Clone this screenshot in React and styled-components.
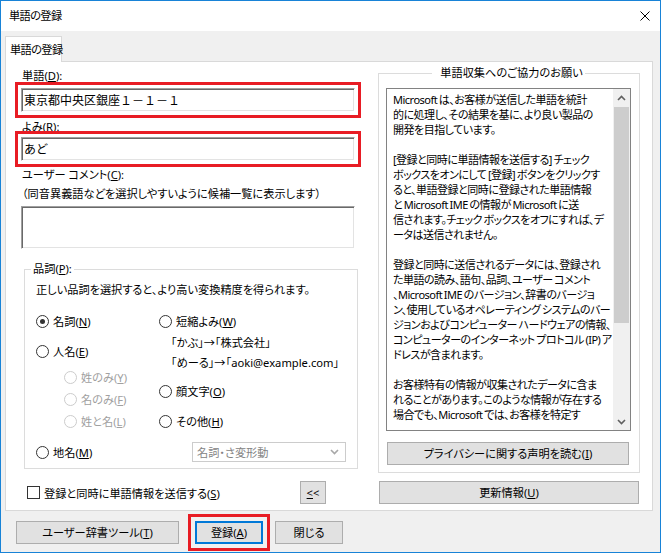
import React from 'react'
import styled, { createGlobalStyle } from 'styled-components'

const GlobalStyle = createGlobalStyle`
  html, body {
    margin: 0;
    padding: 0;
    background: #fff;
  }
  body {
    font-family: "Noto Sans", "Noto Sans CJK JP", sans-serif;
    font-size: 11.2px;
    color: #000;
    font-feature-settings: "palt";
  }
  * {
    box-sizing: border-box;
  }
`

const infoLines = [
  'Microsoft は、お客様が送信した単語を統計',
  '的に処理し、その結果を基に、より良い製品の',
  '開発を目指しています。',
  '',
  '[登録と同時に単語情報を送信する] チェック',
  'ボックスをオンにして [登録] ボタンをクリックす',
  'ると、単語登録と同時に登録された単語情報',
  'と Microsoft IME の情報が Microsoft に送',
  '信されます。チェック ボックスをオフにすれば、デ',
  'ータは送信されません。',
  '',
  '登録と同時に送信されるデータには、登録され',
  'た単語の読み、語句、品詞、ユーザー コメント',
  '、Microsoft IME のバージョン、辞書のバージョ',
  'ン、使用しているオペレーティング システムのバー',
  'ジョンおよびコンピューター ハードウェアの情報、',
  'コンピューターのインターネット プロトコル (IP) ア',
  'ドレスが含まれます。',
  '',
  'お客様特有の情報が収集されたデータに含ま',
  'れることがあります。このような情報が存在する',
  '場合でも、Microsoft では、お客様を特定す',
]

const Chevron = ({ up, color = '#606060' }) => (
  <svg width="9" height="6" viewBox="0 0 9 6">
    <path
      d={up ? 'M1 5L4.5 1.5L8 5' : 'M1 1L4.5 4.5L8 1'}
      fill="none"
      stroke={color}
      strokeWidth="1.6"
    />
  </svg>
)

const Radio = ({ checked, disabled, children, gap, indent }) => (
  <Option $gap={gap} $indent={indent} $disabled={disabled}>
    <Dot $checked={checked} $disabled={disabled} />
    <span>{children}</span>
  </Option>
)

const App = () => {
  return (
    <>
      <GlobalStyle />
      <Window>
        <TitleBar>
          <Caption>単語の登録</Caption>
          <svg width="10" height="10" viewBox="0 0 10 10">
            <path d="M0.5 0.5L9.5 9.5M9.5 0.5L0.5 9.5" stroke="#000" strokeWidth="1" />
          </svg>
        </TitleBar>
        <Body>
          <Tab>
            <Caption>単語の登録</Caption>
          </Tab>
          <Panel>
            <Column>
              <Label $top={3}>
                単語(<u>D</u>):
              </Label>
              <Edit $top={4} $mark>
                東京都中央区銀座１－１－１
              </Edit>
              <Label $top={7}>
                よみ(<u>R</u>):
              </Label>
              <Edit $top={2} $mark>
                あど
              </Edit>
              <Label $top={6}>
                ユーザー コメント(<u>C</u>):
              </Label>
              <Label $top={3}>（同音異義語などを選択しやすいように候補一覧に表示します）</Label>
              <Edit $top={4} $h={43} />
              <GroupBox $margin="12px 0 0 3px" $pad="0 0 6px 11px">
                <Legend>
                  品詞(<u>P</u>):
                </Legend>
                <Note>正しい品詞を選択すると、より高い変換精度を得られます。</Note>
                <Options>
                  <Stack>
                    <Radio checked>
                      名詞(<u>N</u>)
                    </Radio>
                    <Radio gap={10}>
                      人名(<u>E</u>)
                    </Radio>
                    <Radio gap={6} indent={28} disabled>
                      姓のみ(<u>Y</u>)
                    </Radio>
                    <Radio gap={2} indent={28} disabled>
                      名のみ(<u>F</u>)
                    </Radio>
                    <Radio gap={2} indent={28} disabled>
                      姓と名(<u>L</u>)
                    </Radio>
                    <Radio gap={11}>
                      地名(<u>M</u>)
                    </Radio>
                  </Stack>
                  <Stack>
                    <Radio>
                      短縮よみ(<u>W</u>)
                    </Radio>
                    <Example $gap={2}>「かぶ」→「株式会社」</Example>
                    <Example>「めーる」→「aoki@example.com」</Example>
                    <Radio gap={8}>
                      顔文字(<u>O</u>)
                    </Radio>
                    <Radio gap={10}>
                      その他(<u>H</u>)
                    </Radio>
                    <Combo>
                      <span>名詞・さ変形動</span>
                      <Chevron color="#a8a8a8" />
                    </Combo>
                  </Stack>
                </Options>
              </GroupBox>
            </Column>

            <GroupBox $pad="0 8px 7px 7px">
              <Legend $center>単語収集へのご協力のお願い</Legend>
              <InfoBox>
                <InfoText>
                  {infoLines.map((line, i) => (
                    <InfoLine key={i}>{line}</InfoLine>
                  ))}
                </InfoText>
                <ScrollBar>
                  <ScrollArrow>
                    <Chevron up />
                  </ScrollArrow>
                  <Track>
                    <Thumb style={{ height: 216 }} />
                  </Track>
                  <ScrollArrow>
                    <Chevron />
                  </ScrollArrow>
                </ScrollBar>
              </InfoBox>
              <Button $top={11} $mx="0 2px 0 1px">
                プライバシーに関する声明を読む(<u>I</u>)
              </Button>
            </GroupBox>

            <SendRow>
              <Check>
                <Box />
                <span>
                  登録と同時に単語情報を送信する(<u>S</u>)
                </span>
              </Check>
              <Button $w={26}>
                <u>&lt;</u>&lt;
              </Button>
            </SendRow>
            <Button $mx="0 1px">
              更新情報(<u>U</u>)
            </Button>
          </Panel>
          <Footer>
            <Button $w={163}>
              ユーザー辞書ツール(<u>T</u>)
            </Button>
            <Button $w={68} $ml={16} $default $mark>
              登録(<u>A</u>)
            </Button>
            <Button $w={68} $ml={12}>
              閉じる
            </Button>
          </Footer>
        </Body>
      </Window>
    </>
  )
}

const Window = styled.div`
  width: 661px;
  height: 553px;
  border: 1px solid #1883d7;
  background: #f0f0f0;
  display: flex;
  flex-direction: column;
`
const TitleBar = styled.div`
  height: 30px;
  flex: none;
  background: #fff;
  display: flex;
  align-items: center;
  justify-content: space-between;
  padding: 0 10px 0 8px;
  line-height: 16px;
`
const Caption = styled.span`
  white-space: nowrap;
  letter-spacing: -0.6px;
`
const Body = styled.div`
  flex: 1;
  padding: 5px 0 0 4px;
  display: flex;
  flex-direction: column;
  align-items: flex-start;
`
const Tab = styled.div`
  width: 57px;
  height: 26px;
  margin-bottom: -1px;
  padding: 5px 0 0 4px;
  line-height: 16px;
  background: #fff;
  border: 1px solid #d9d9d9;
  border-bottom: none;
  position: relative;
  z-index: 1;
`
const Panel = styled.div`
  width: 648px;
  height: 450px;
  background: #fff;
  border: 1px solid #d9d9d9;
  padding: 3px 12px 5px 15px;
  display: grid;
  grid-template-columns: 337px 262px;
  grid-template-rows: 408px 23px;
  column-gap: 20px;
  row-gap: 8px;
  align-items: start;
`
const Column = styled.div`
  display: flex;
  flex-direction: column;
`
const Label = styled.div`
  line-height: 16px;
  margin-top: ${(p) => p.$top || 0}px;
  padding-left: 1px;
  white-space: nowrap;
`
const Edit = styled.div`
  width: 334px;
  height: ${(p) => p.$h || 24}px;
  margin-top: ${(p) => p.$top || 0}px;
  padding: 0 2px;
  display: flex;
  align-items: ${(p) => (p.$h ? 'flex-start' : 'center')};
  font-size: 12px;
  font-feature-settings: normal;
  border: 1px solid;
  border-color: #a0a0a0 #fff #fff #a0a0a0;
  box-shadow: inset 1px 1px 0 #696969, inset -1px -1px 0 #e3e3e3;
  ${(p) => p.$mark && 'outline: 3px solid #e81c24; outline-offset: 3px;'}
`
const GroupBox = styled.fieldset`
  margin: ${(p) => p.$margin || 0};
  padding: ${(p) => p.$pad || 0};
  border: 1px solid #dcdcdc;
  min-width: 0;
  display: flex;
  flex-direction: column;
`
const Legend = styled.legend`
  line-height: 16px;
  padding: 0 2px;
  margin-left: -5px;
  white-space: nowrap;
  ${(p) => p.$center && 'margin: 0 auto; padding: 0 2px 0 8px;'}
`
const Note = styled.div`
  line-height: 16px;
  margin-top: 5px;
  white-space: nowrap;
`
const Options = styled.div`
  display: grid;
  grid-template-columns: 123px 1fr;
  margin-top: 13px;
`
const Stack = styled.div`
  display: flex;
  flex-direction: column;
`
const Option = styled.label`
  height: 20px;
  display: flex;
  align-items: center;
  margin-top: ${(p) => p.$gap || 0}px;
  margin-left: ${(p) => p.$indent || 0}px;
  color: ${(p) => (p.$disabled ? '#a0a0a0' : '#000')};
  white-space: nowrap;
`
const Dot = styled.span`
  width: 13px;
  height: 13px;
  flex: none;
  margin-right: 4px;
  border-radius: 50%;
  background: #fff;
  border: 1px solid ${(p) => (p.$disabled ? '#cccccc' : '#333')};
  display: flex;
  align-items: center;
  justify-content: center;
  &::after {
    content: '';
    width: 5px;
    height: 5px;
    border-radius: 50%;
    background: #333;
    display: ${(p) => (p.$checked ? 'block' : 'none')};
  }
`
const Example = styled.div`
  height: 20px;
  line-height: 20px;
  margin-top: ${(p) => p.$gap || 0}px;
  padding-left: 12px;
  white-space: nowrap;
`
const Combo = styled.div`
  width: 154px;
  height: 20px;
  margin: 11px 0 0 33px;
  padding: 0 6px 0 4px;
  border: 1px solid #cccccc;
  background: #fff;
  color: #838383;
  display: flex;
  align-items: center;
  justify-content: space-between;
`
const InfoBox = styled.div`
  height: 343px;
  margin-top: 7px;
  border: 1px solid #828282;
  display: flex;
`
const InfoText = styled.div`
  flex: 1;
  padding: 3px 0 0 6px;
  overflow: hidden;
  font-size: 11px;
  letter-spacing: -0.5px;
  word-spacing: -0.8px;
`
const InfoLine = styled.div`
  height: 15px;
  line-height: 15px;
  white-space: nowrap;
`
const ScrollBar = styled.div`
  width: 17px;
  flex: none;
  background: #f0f0f0;
  display: flex;
  flex-direction: column;
`
const ScrollArrow = styled.div`
  height: 17px;
  display: flex;
  align-items: center;
  justify-content: center;
`
const Track = styled.div`
  flex: 1;
  padding: 1px;
`
const Thumb = styled.div`
  background: #cdcdcd;
`
const Button = styled.button`
  height: 23px;
  width: ${(p) => (p.$w ? `${p.$w}px` : 'auto')};
  margin: ${(p) => p.$mx || 0};
  margin-top: ${(p) => p.$top || 0}px;
  margin-left: ${(p) => (p.$ml ? `${p.$ml}px` : undefined)};
  padding: 0;
  font: inherit;
  line-height: 16px;
  color: #000;
  background: #e1e1e1;
  white-space: nowrap;
  border: ${(p) => (p.$default ? '2px solid #0078d7' : '1px solid #adadad')};
  ${(p) => p.$mark && 'outline: 3px solid #e81c24; outline-offset: 4px;'}
`
const SendRow = styled.div`
  display: flex;
  align-items: center;
  justify-content: space-between;
  padding: 0 32px 0 6px;
`
const Check = styled.label`
  display: flex;
  align-items: center;
  white-space: nowrap;
`
const Box = styled.span`
  width: 13px;
  height: 13px;
  margin-right: 4px;
  border: 1px solid #333;
  background: #fff;
`
const Footer = styled.div`
  display: flex;
  padding: 10px 0 0 11px;
`

export default App
